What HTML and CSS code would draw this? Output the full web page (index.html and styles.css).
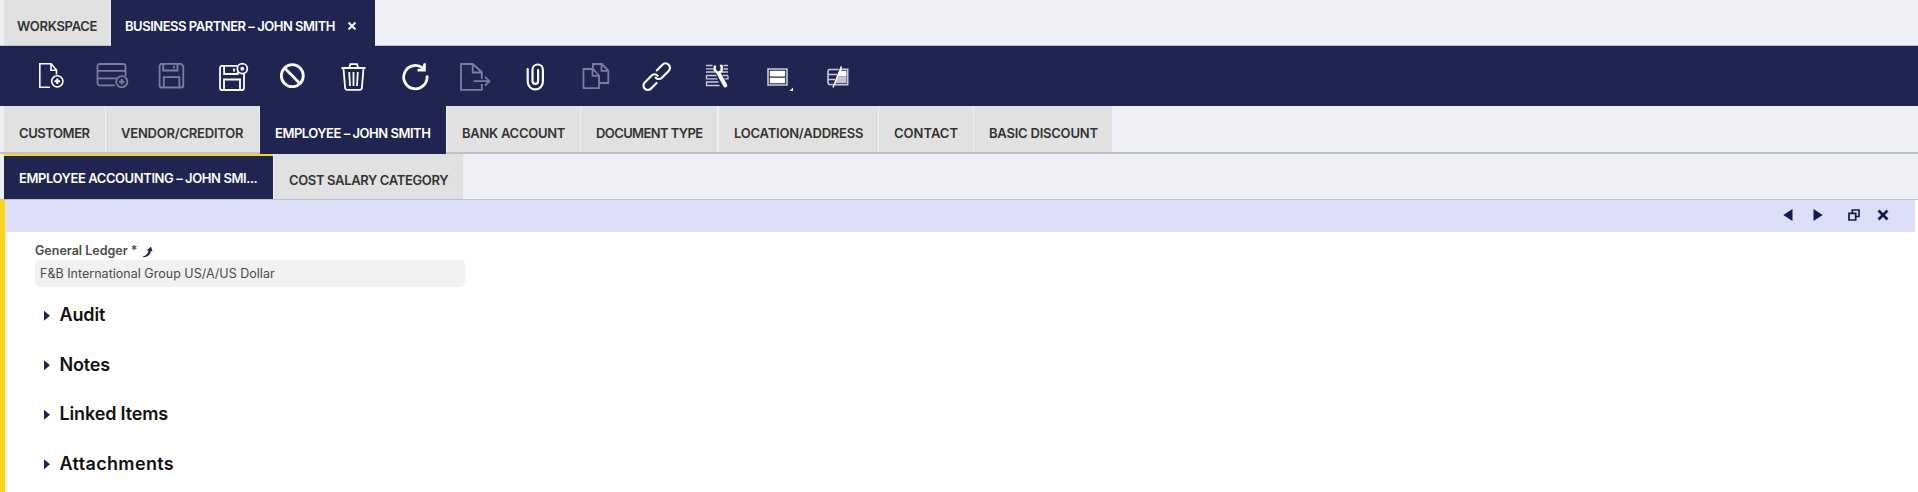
FILE: index.html
```
<!DOCTYPE html>
<html lang="en">
<head>
<meta charset="utf-8">
<title>Business Partner</title>
<link rel="stylesheet" href="styles.css">
</head>
<body>
<nav class="bar windows">
  <div class="tab w-workspace"><span>WORKSPACE</span></div>
  <div class="tab active w-partner"><span>BUSINESS PARTNER – JOHN SMITH</span>
    <svg class="close" viewBox="0 0 10 10"><path d="M1.500 1.500l7 7M8.500 1.500l-7 7"/></svg></div>
</nav>
<div class="toolbar">
  <svg viewBox="0 0 36 36"><path d="M17 29.300H6.800V5.800h11.400l5.300 6.200v4.500M18 6v6.200h5.500"/><circle cx="24.300" cy="23.300" r="5.600"/><path class="thick" d="M24.300 20.500v5.600M21.500 23.300h5.600"/></svg>
  <svg class="off" viewBox="0 0 36 36"><path d="M21 27.300H5.500a2 2 0 0 1-2-2V8a2 2 0 0 1 2-2h24a2 2 0 0 1 2 2v10M3.500 12.800h28M3.500 20.300h19"/><circle cx="27.800" cy="23.700" r="5.600"/><path class="thick" d="M27.800 21v5.400M25.100 23.700h5.400"/></svg>
  <svg class="off" viewBox="0 0 36 36"><path d="M7 5.800h20l2.300 2.400V27.500a2 2 0 0 1-2 2H7.600a2 2 0 0 1-2-2V7.500zM9.200 5.800v6.700h14.300V5.800M20 7.500v3M9.800 29.500V19.200h15.600v10.300"/></svg>
  <svg class="mid" viewBox="0.500 0 36 36"><path d="M22.500 7.800H7.500a2 2 0 0 0-2 2V30a2 2 0 0 0 2 2h20a2 2 0 0 0 2-2V16M9.600 8v8h13.600v-2M19.500 10.500v3M9.500 32V21.500h16V32"/><circle cx="27.800" cy="10.700" r="5"/><circle class="solid" cx="27.800" cy="10.700" r="1.900"/></svg>
  <svg class="bold" viewBox="0 0 36 36"><circle cx="17.300" cy="17.700" r="11"/><path d="M9.600 10l15.400 15.400"/></svg>
  <svg class="mid" viewBox="0.500 0 36 36"><path d="M6 10h24M13.800 9.500l1-3.300h6.700l1 3.300M8 10.500l1.600 19.300a2.300 2.300 0 0 0 2.300 2h12.200a2.300 2.300 0 0 0 2.300-2L28 10.500M13.700 14l.8 14M18 14v14M22.300 14l-.8 14"/></svg>
  <svg class="bold" viewBox="0 0 36 36"><path d="M31 17.500a11.700 11.700 0 1 1-4.500-7.700"/><path class="solid" d="M29.800 5v8.500H21.500v-2.500l4.500-.5 1.500-5z"/></svg>
  <svg class="off" viewBox="0.500 0 36 36"><path d="M25.300 21v-7L16.200 6H4.500v25.800h20.800V26M16.200 6v8.500h9M17 23.200h15.500M28.500 18.800l4.500 4.400-4.500 4.400"/></svg>
  <svg class="clip" viewBox="0.500 0 36 36"><path d="M11.200 11v12.800a7.600 7.600 0 0 0 15.200 0V11.700a5.200 5.200 0 0 0-10.400 0V23a2.800 2.800 0 0 0 5.600 0V12"/></svg>
  <svg class="off" viewBox="0.500 0 36 36"><path d="M15.500 10.500V6h9l6.300 6.500V25H21.500M24 6v6.800h6.500M6 11h9.500l6 6.500v12.700H6zM15 11v6.800h6.500"/></svg>
  <svg class="link" viewBox="0 0 36 36"><g transform="translate(18.700 18.700) rotate(-45)"><path d="M4.500-4.400H12.500a4.400 4.400 0 0 1 0 8.800H3A4.400 4.400 0 0 1-1.400 0M-4.500 4.400H-12.500a4.400 4.400 0 0 1 0-8.800H-3A4.400 4.400 0 0 1 1.400 0"/></g></svg>
  <svg class="thin" viewBox="0.500 0 36 36"><path d="M14 7.500H7.500M7.500 10.800H15M7.500 14h9M18 17.500H8v3.300h11M20 24H8v3.500h13M29.500 7.500H25M29.500 11H25M22.500 14h7M24 17.500h5.500M26 20.800h3.500v-3"/><path class="tool" d="M20.500 16l6.300 11.500"/><path class="jaw" d="M16.500 7.500l-.5 4 3 3.500 4-2 .3-4.500-1.500-1.500"/></svg>
  <svg class="frame" viewBox="0 0 36 36"><path d="M9 11h19v16H9z"/><path class="solid" d="M10.800 12.800h15.400v5.700H10.800zM10.800 19.700h15.400v5.500H10.800zM34 29.500V33h-3.500z"/></svg>
  <svg class="frame" viewBox="0.500 0 36 36"><path d="M19 11.500H9.500L8.500 13v12l1 1.500H14M8.500 16.500h9M8.500 21.500h7M21 11.200h7.200v15.500H15.500"/><path class="solid" d="M21.800 8v4.800H27V18.500h-9.300z"/><path class="fade" d="M17.700 18.500H27v6.800H16.500L13.300 29.500z"/><path class="slash" d="M13.500 29.500L21.800 8.500"/></svg>
</div>
<nav class="bar level1">
  <div class="tab t1"><span>CUSTOMER</span></div>
  <div class="tab t2"><span>VENDOR/CREDITOR</span></div>
  <div class="tab active t3"><span>EMPLOYEE – JOHN SMITH</span></div>
  <div class="tab t4"><span>BANK ACCOUNT</span></div>
  <div class="tab t5"><span>DOCUMENT TYPE</span></div>
  <div class="tab t6"><span>LOCATION/ADDRESS</span></div>
  <div class="tab t7"><span>CONTACT</span></div>
  <div class="tab t8"><span>BASIC DISCOUNT</span></div>
</nav>
<nav class="bar level2">
  <div class="tab active s1"><span>EMPLOYEE ACCOUNTING – JOHN SMI...</span></div>
  <div class="tab s2"><span>COST SALARY CATEGORY</span></div>
</nav>
<main class="panel">
  <header class="controls">
    <svg class="prev" viewBox="0 0 10 12"><path d="M9.500 0v12L.3 6z"/></svg>
    <svg class="next" viewBox="0 0 10 12"><path d="M.5 0v12l9.200-6z"/></svg>
    <svg class="restore" viewBox="0 0 12 12"><path d="M4.300 3.500V1h6.700v6.500H8.500M1 4.300h6.700V11H1z"/></svg>
    <svg class="shut" viewBox="0 0 12 12"><path d="M1.500 1.500l9 9M10.500 1.500l-9 9"/></svg>
  </header>
  <form class="form">
    <label class="label"><span>General Ledger *</span><svg viewBox="0 0 12 12"><path d="M1 10.500Q6 9 6.500 4.500L4.500 4.500 9 .8l1.500 4.500L9 5Q8.500 10.500 1 11.300z"/></svg></label>
    <div class="field"><span>F&amp;B International Group US/A/US Dollar</span></div>
    <section class="section"><i></i><span>Audit</span></section>
    <section class="section"><i></i><span>Notes</span></section>
    <section class="section linked"><i></i><span>Linked Items</span></section>
    <section class="section attachments"><i></i><span>Attachments</span></section>
  </form>
</main>
</body>
</html>
```
FILE: styles.css
```
* { box-sizing: border-box; }
body { margin: 0; height: 492px; overflow: hidden; background: #fff; font-family: Inter, "Open Sans", sans-serif; color: #333; }
svg { display: block; flex: none; }
.bar { display: flex; padding-left: 4px; background: #eff0f6; }
.tab { flex: none; display: flex; align-items: center; background: #e1e1e1; font-size: 13px; font-weight: 600; line-height: 20px; white-space: nowrap; }
.active { background: #202451; color: #fff; }
.windows { height: 46px; border-bottom: 1px solid #bfc3c7; }
.windows .tab { height: 45px; padding: 7px 0 0 13px; }
.windows .active { height: 46px; padding: 6px 0 0 14px; }
.w-workspace { width: 107px; letter-spacing: -0.28px; }
.w-partner { width: 264px; letter-spacing: -0.48px; }
.close { width: 10px; height: 10px; margin-left: 12px; fill: none; stroke: #fff; stroke-width: 2; }
.toolbar { height: 60px; display: flex; align-items: center; gap: 24.5px; padding-left: 33px; background: #202451; }
.toolbar svg { width: 36px; height: 36px; fill: none; stroke: #fff; stroke-width: 1.6; }
.toolbar .off { stroke: #7b7e9e; stroke-width: 1.8; }
.toolbar .mid { stroke-width: 1.8; }
.toolbar .bold { stroke-width: 2.8; }
.toolbar .clip, .toolbar .link { stroke-width: 2.2; stroke-linecap: round; }
.toolbar .thin { stroke: #c9cad8; stroke-width: 1.3; }
.toolbar .frame { stroke: #c9cad8; stroke-width: 1.6; }
.toolbar .thick { stroke-width: 2; }
.toolbar .solid { fill: #fff; stroke: none; }
.toolbar .fade { fill: #c4c5cf; stroke: none; }
.toolbar .slash { stroke: #fff; stroke-width: 1.4; }
.toolbar .tool { stroke: #fff; stroke-width: 4; stroke-linecap: round; }
.toolbar .jaw { stroke: #fff; stroke-width: 2.4; }
.level1 { height: 48px; border-bottom: 2px solid #bfc3c7; }
.level1 .tab { height: 46px; padding: 8px 0 0 15px; margin-right: 1px; }
.level1 .active { height: 48px; padding: 8px 0 2px 15px; }
.t1 { width: 101px; letter-spacing: -0.43px; }
.t2 { width: 153px; letter-spacing: -0.22px; }
.t3 { width: 186px; letter-spacing: -0.48px; }
.t4 { width: 133px; letter-spacing: -0.28px; }
.t5 { width: 136px; letter-spacing: -0.6px; }
.level1 .t5 { margin-right: 2px; }
.t6 { width: 159px; letter-spacing: -0.22px; }
.t7 { width: 94px; }
.t8 { width: 138px; letter-spacing: -0.22px; }
.level2 { height: 46px; border-bottom: 1px solid #bfc3c7; }
.level2 .tab { height: 45px; padding: 7px 0 0 15px; margin-right: 1px; }
.level2 .active { border-top: 2px solid #fbd618; padding-top: 0; }
.s1 { width: 269px; letter-spacing: -0.42px; }
.s2 { width: 189px; letter-spacing: -0.36px; }
.panel { height: 292px; border-left: 5px solid #fbd618; }
.controls { height: 32px; display: flex; justify-content: flex-end; align-items: flex-start; padding: 9px 26px 0 0; margin-right: 3px; background: #dcdff6; }
.controls svg { fill: #161a4a; height: 12px; }
.prev { width: 10px; margin-right: 20px; }
.next { width: 10px; margin-right: 25px; }
.controls .restore { width: 12px; margin-right: 17px; fill: none; stroke: #161a4a; stroke-width: 1.7; }
.controls .shut { width: 12px; fill: none; stroke: #161a4a; stroke-width: 2.8; }
.form { padding: 9px 0 0 30px; }
.label { display: flex; align-items: center; height: 19px; font-size: 12.5px; font-weight: 600; color: #4b4b4b; }
.label svg { width: 12px; height: 12px; margin: 2px 0 0 4px; fill: #202451; }
.field { width: 430px; height: 27px; display: flex; align-items: center; padding-left: 5px; border-radius: 5px; background: #f1f1f1; font-size: 12.5px; letter-spacing: 0.02px; color: #4b4b4b; margin-bottom: 3px; }
.section { display: flex; align-items: center; height: 49.5px; padding-left: 9px; font-size: 18px; font-weight: 600; letter-spacing: -0.15px; color: #111; }
.section i { width: 6px; height: 10px; margin: 2px 9.5px 0 0; background: #202451; clip-path: polygon(0 0, 100% 50%, 0 100%); }
.attachments { letter-spacing: 0.35px; }
```
